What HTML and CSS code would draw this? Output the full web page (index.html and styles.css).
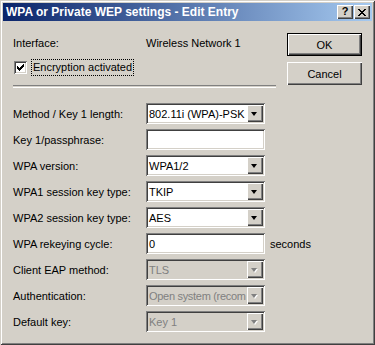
FILE: index.html
```html
<!DOCTYPE html>
<html lang="en">

<head>
    <meta charset="UTF-8">
    <meta name="viewport" content="width=device-width, initial-scale=1.0">
    <title>WPA or Private WEP settings - Edit Entry</title>
    <link rel="stylesheet" href="styles.css">
</head>

<body>
    <div class="window">
        <!-- Barra del titolo -->
        <div class="titlebar">
            <span class="title">WPA or Private WEP settings - Edit Entry</span>
            <div class="caption-btns">
                <span class="cap-btn help">?</span>
                <span class="cap-btn">
                    <svg width="8" height="7" viewBox="0 0 8 7">
                        <path d="M0 0h2v1h1v1h2v-1h1v-1h2v1h-1v1h-1v1h-1v1h1v1h1v1h1v1h-2v-1h-1v-1h-2v1h-1v1h-2v-1h1v-1h1v-1h1v-1h-1v-1h-1v-1h-1z" fill="#000"/>
                    </svg>
                </span>
            </div>
        </div>

        <div class="content">
            <div class="top">
                <div class="top-left">
                    <div class="info-row">
                        <span class="info-label">Interface:</span>
                        <span>Wireless Network 1</span>
                    </div>
                    <div class="check-row">
                        <span class="checkbox">
                            <svg width="7" height="7" viewBox="0 0 7 7">
                                <path d="M0 2h1v1h1v1h1v-1h1v-1h1v-1h1v-1h1v3h-1v1h-1v1h-1v1h-1v1h-1v-1h-1v-1h-1v-1h-1z" fill="#000"/>
                            </svg>
                        </span>
                        <span class="check-label">Encryption activated</span>
                    </div>
                    <div class="separator"></div>
                </div>
                <div class="buttons">
                    <div class="btn default">OK</div>
                    <div class="btn">Cancel</div>
                </div>
            </div>

            <div class="form">
                <span class="lbl">Method / Key 1 length:</span>
                <div class="combo"><span class="val">802.11i (WPA)-PSK</span><span class="drop"></span></div>
                <span></span>

                <span class="lbl">Key 1/passphrase:</span>
                <div class="field"></div>
                <span></span>

                <span class="lbl">WPA version:</span>
                <div class="combo"><span class="val">WPA1/2</span><span class="drop"></span></div>
                <span></span>

                <span class="lbl">WPA1 session key type:</span>
                <div class="combo"><span class="val">TKIP</span><span class="drop"></span></div>
                <span></span>

                <span class="lbl">WPA2 session key type:</span>
                <div class="combo"><span class="val">AES</span><span class="drop"></span></div>
                <span></span>

                <span class="lbl">WPA rekeying cycle:</span>
                <div class="field"><span class="val">0</span></div>
                <span class="suffix">seconds</span>

                <span class="lbl">Client EAP method:</span>
                <div class="combo disabled"><span class="val">TLS</span><span class="drop"></span></div>
                <span></span>

                <span class="lbl">Authentication:</span>
                <div class="combo disabled"><span class="val tight">Open system (recom</span><span class="drop"></span></div>
                <span></span>

                <span class="lbl">Default key:</span>
                <div class="combo disabled"><span class="val">Key 1</span><span class="drop"></span></div>
                <span></span>
            </div>
        </div>
    </div>
</body>

</html>
```

FILE: styles.css
```css
body {
    margin: 0;
    font-family: 'Liberation Sans', Arial, sans-serif;
    font-size: 11px;
    color: #000;
    background: #d4d0c8;
}

/* Finestra stile Windows 2000 */
.window {
    box-sizing: border-box;
    width: 375px;
    height: 345px;
    padding: 3px;
    background: #d4d0c8;
    box-shadow: inset 1px 1px #d4d0c8, inset -1px -1px #404040,
        inset 2px 2px #fff, inset -2px -2px #808080;
    display: flex;
    flex-direction: column;
}

.titlebar {
    height: 18px;
    display: flex;
    align-items: center;
    justify-content: space-between;
    padding: 0 2px 0 3px;
    background: linear-gradient(to right, #0a246a, #a6caf0);
}

.title {
    color: #fff;
    font-weight: bold;
    font-size: 12px;
}

.caption-btns {
    display: flex;
    gap: 1px;
}

.cap-btn {
    box-sizing: border-box;
    width: 16px;
    height: 14px;
    display: flex;
    align-items: center;
    justify-content: center;
    background: #d4d0c8;
    box-shadow: inset 1px 1px #fff, inset -1px -1px #404040, inset -2px -2px #808080;
}

.cap-btn.help {
    font-weight: bold;
    font-size: 11px;
    line-height: 1;
    padding-bottom: 1px;
}

.content {
    padding: 12px 10px 0 10px;
}

.top {
    display: flex;
}

.top-left {
    width: 274px;
}

.info-row {
    display: flex;
    margin-top: 4px;
    line-height: 13px;
}

.info-label {
    width: 133px;
}

.check-row {
    display: flex;
    align-items: center;
    margin-top: 9px;
    padding-left: 1px;
}

.checkbox {
    box-sizing: border-box;
    width: 13px;
    height: 13px;
    padding: 3px;
    background: #fff;
    box-shadow: inset 1px 1px #808080, inset -1px -1px #fff,
        inset 2px 2px #404040, inset -2px -2px #d4d0c8;
    display: flex;
}

.check-label {
    margin-left: 4px;
    padding: 1px 1px;
    line-height: 13px;
    border: 1px dotted #000;
}

.separator {
    width: 263px;
    height: 1px;
    margin-top: 9px;
    border-top: 1px solid #808080;
    border-bottom: 1px solid #fff;
}

.buttons {
    display: flex;
    flex-direction: column;
    gap: 6px;
}

.btn {
    box-sizing: border-box;
    width: 75px;
    height: 23px;
    display: flex;
    align-items: center;
    justify-content: center;
    box-shadow: inset 1px 1px #fff, inset -1px -1px #404040, inset -2px -2px #808080;
}

.btn.default {
    border: 1px solid #000;
}

.form {
    display: grid;
    grid-template-columns: 133px 119px 1fr;
    grid-auto-rows: 21px;
    row-gap: 5px;
    margin-top: 15px;
    align-items: center;
}

.combo,
.field {
    box-sizing: border-box;
    height: 21px;
    display: flex;
    align-items: center;
    padding: 2px;
    background: #fff;
    box-shadow: inset 1px 1px #808080, inset -1px -1px #fff,
        inset 2px 2px #404040, inset -2px -2px #d4d0c8;
    overflow: hidden;
}

.val {
    flex: 1;
    padding-left: 1px;
    white-space: nowrap;
    overflow: hidden;
}

.val.tight {
    letter-spacing: -0.3px;
}

.drop {
    box-sizing: border-box;
    width: 16px;
    height: 17px;
    flex-shrink: 0;
    background: #d4d0c8;
    box-shadow: inset 1px 1px #fff, inset -1px -1px #404040, inset -2px -2px #808080;
    position: relative;
}

/* triangolo della freccia */
.drop::after {
    content: '';
    position: absolute;
    left: 4px;
    top: 7px;
    border-left: 3.5px solid transparent;
    border-right: 3.5px solid transparent;
    border-top: 4px solid #000;
}

.combo.disabled {
    background: #d4d0c8;
    color: #808080;
}

.combo.disabled .drop::after {
    border-top-color: #808080;
    filter: drop-shadow(1px 1px 0 #fff);
}

.suffix {
    padding-left: 5px;
}
```
